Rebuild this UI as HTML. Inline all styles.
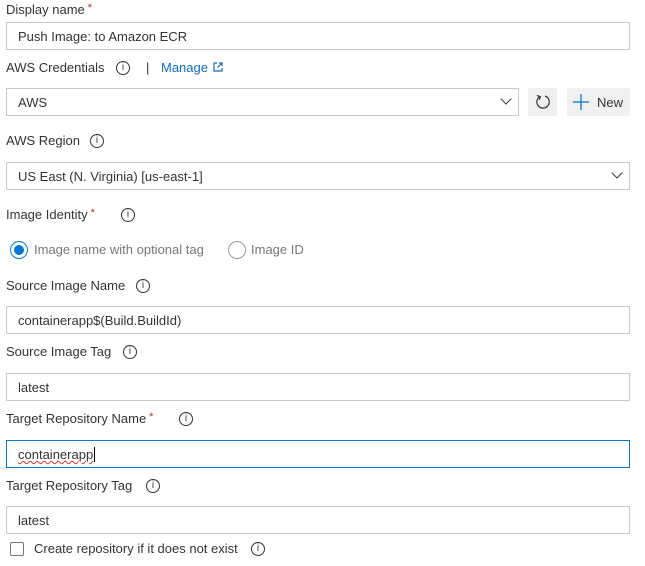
<!DOCTYPE html>
<html><head><meta charset="utf-8"><style>
*{box-sizing:border-box;margin:0;padding:0}
body{width:645px;height:566px;background:#fff;position:relative;overflow:hidden;font-family:"Liberation Sans",Arial,sans-serif;font-size:13px;color:#333}
.a{position:absolute;white-space:nowrap}
.l{position:absolute;left:6px;line-height:16px;white-space:nowrap}
.in{position:absolute;left:6px;width:624px;height:28px;border:1px solid #c8c8c8;padding-left:11px;line-height:27px;white-space:nowrap}
.st{color:#c4262e;font-size:11px;position:relative;top:-3px;margin-left:3px}
.i{position:absolute;width:14px;height:14px;border:1px solid #333;border-radius:50%;font-size:10px;line-height:12px;text-align:center;font-family:"Liberation Sans",sans-serif;margin-left:-1px;margin-top:-1px}
.chev{position:absolute;width:8px;height:8px;border-right:1.2px solid #333;border-bottom:1.2px solid #333;transform:rotate(45deg)}
</style></head><body>
<div class="l" style="top:2px">Display name<span class="st">*</span></div>
<div class="in" style="top:22px">Push Image: to Amazon ECR</div>

<div class="l" style="top:60px">AWS Credentials</div>
<div class="i" style="left:117px;top:62px">i</div>
<div class="a" style="left:146px;top:60px">|</div>
<div class="a" style="left:161px;top:60px;color:#106ebe">Manage</div>
<svg class="a" style="left:213px;top:62px" width="10" height="10" viewBox="0 0 10 10"><path d="M4 1H1v8h8V6M6 1h3v3M9 1L4.5 5.5" fill="none" stroke="#106ebe" stroke-width="1.2"/></svg>

<div class="in" style="top:88px;width:513px">AWS</div>
<div class="chev" style="left:502px;top:95px"></div>
<div class="a" style="left:528px;top:88px;width:29px;height:28px;background:#f0f0f0"></div>
<svg class="a" style="left:534px;top:93px" width="18" height="18" viewBox="0 0 18 18"><path d="M6 3.5A6.2 6.2 0 1 0 11 3" fill="none" stroke="#333" stroke-width="1.2"/><path d="M3 2.5L6.3 3.6 5.4 6.8" fill="none" stroke="#333" stroke-width="1.2"/></svg>
<div class="a" style="left:567px;top:88px;width:63px;height:28px;background:#f0f0f0"></div>
<svg class="a" style="left:573px;top:94px" width="16" height="16" viewBox="0 0 16 16"><path d="M8 0v16M0 8h16" stroke="#2a84d6" stroke-width="1.5"/></svg>
<div class="a" style="left:597px;top:95px">New</div>

<div class="l" style="top:133px">AWS Region</div>
<div class="i" style="left:91px;top:135px">i</div>
<div class="in" style="top:162px">US East (N. Virginia) [us-east-1]</div>
<div class="chev" style="left:613px;top:169px"></div>

<div class="l" style="top:207px">Image Identity<span class="st">*</span></div>
<div class="i" style="left:122px;top:209px">i</div>
<div class="a" style="left:10px;top:241px;width:18px;height:18px;border:1.5px solid #0078d4;border-radius:50%"></div>
<div class="a" style="left:14px;top:245px;width:10px;height:10px;background:#0078d4;border-radius:50%"></div>
<div class="a" style="left:34px;top:242px;color:#777">Image name with optional tag</div>
<div class="a" style="left:228px;top:241px;width:18px;height:18px;border:1px solid #999;border-radius:50%"></div>
<div class="a" style="left:251px;top:242px;color:#777">Image ID</div>

<div class="l" style="top:278px">Source Image Name</div>
<div class="i" style="left:137px;top:280px">i</div>
<div class="in" style="top:306px">containerapp$(Build.BuildId)</div>

<div class="l" style="top:344px">Source Image Tag</div>
<div class="i" style="left:124px;top:346px">i</div>
<div class="in" style="top:373px">latest</div>

<div class="l" style="top:411px">Target Repository Name<span class="st">*</span></div>
<div class="i" style="left:180px;top:413px">i</div>
<div class="in" style="top:440px;border-color:#0078d4"><span style="text-decoration:underline wavy #d33;text-decoration-thickness:1px">containerapp</span><span style="border-left:1px solid #000;margin-left:1px"></span></div>

<div class="l" style="top:478px">Target Repository Tag</div>
<div class="i" style="left:147px;top:480px">i</div>
<div class="in" style="top:506px">latest</div>

<div class="a" style="left:10px;top:542px;width:14px;height:14px;border:1px solid #777;border-radius:2px"></div>
<div class="a" style="left:34px;top:541px">Create repository if it does not exist</div>
<div class="i" style="left:252px;top:543px">i</div>
</body></html>
